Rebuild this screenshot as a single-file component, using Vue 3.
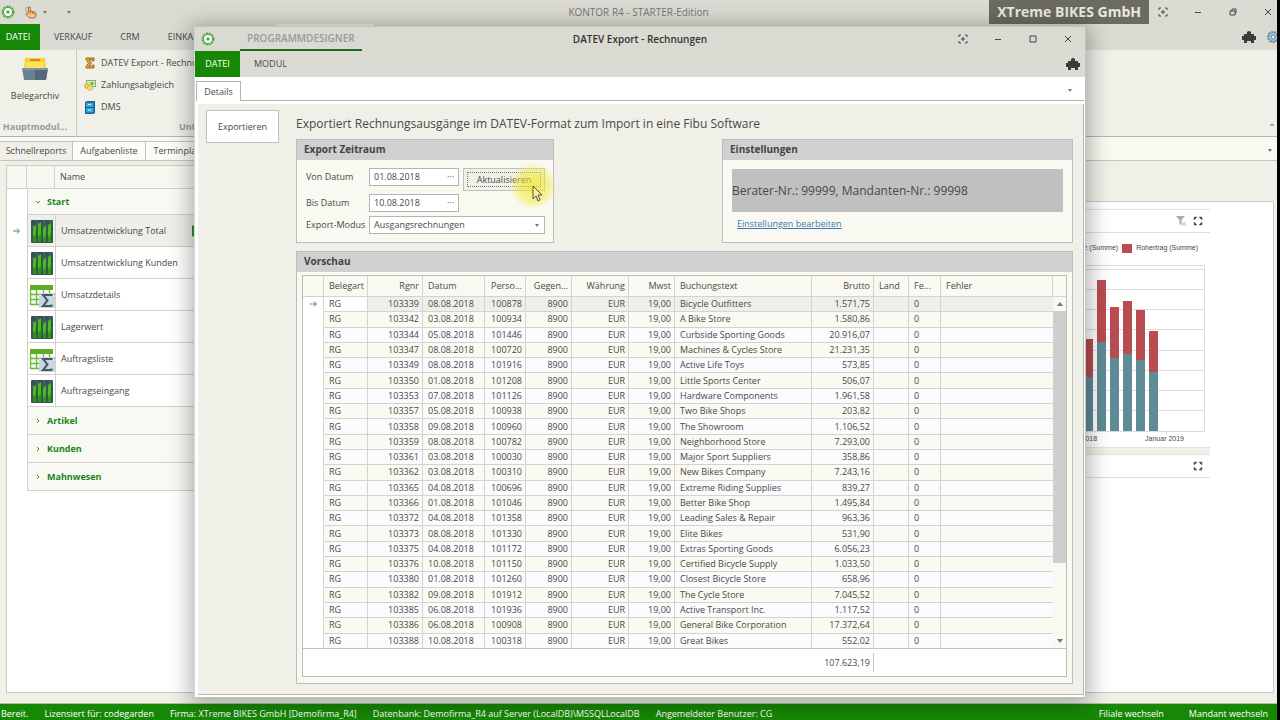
<script setup>
import { ref } from "vue";

const reports = [
  { name: "Umsatzentwicklung Total", icon: "chart", active: true },
  { name: "Umsatzentwicklung Kunden", icon: "chart" },
  { name: "Umsatzdetails", icon: "sum" },
  { name: "Lagerwert", icon: "chart" },
  { name: "Auftragsliste", icon: "sum" },
  { name: "Auftragseingang", icon: "chart" },
];
const groups = ["Artikel", "Kunden", "Mahnwesen"];

const fromDate = ref("01.08.2018");
const toDate = ref("10.08.2018");
const mode = ref("Ausgangsrechnungen");

const rows = [
  ["103339", "08.08.2018", "100878", "Bicycle Outfitters", "1.571,75"],
  ["103342", "03.08.2018", "100934", "A Bike Store", "1.580,86"],
  ["103344", "05.08.2018", "101446", "Curbside Sporting Goods", "20.916,07"],
  ["103347", "08.08.2018", "100720", "Machines & Cycles Store", "21.231,35"],
  ["103349", "08.08.2018", "101916", "Active Life Toys", "573,85"],
  ["103350", "01.08.2018", "101208", "Little Sports Center", "506,07"],
  ["103353", "07.08.2018", "101126", "Hardware Components", "1.961,58"],
  ["103357", "05.08.2018", "100938", "Two Bike Shops", "203,82"],
  ["103358", "09.08.2018", "100960", "The Showroom", "1.106,52"],
  ["103359", "08.08.2018", "100782", "Neighborhood Store", "7.293,00"],
  ["103361", "03.08.2018", "100030", "Major Sport Suppliers", "358,86"],
  ["103362", "03.08.2018", "100310", "New Bikes Company", "7.243,16"],
  ["103365", "04.08.2018", "100696", "Extreme Riding Supplies", "839,27"],
  ["103366", "01.08.2018", "101046", "Better Bike Shop", "1.495,84"],
  ["103372", "04.08.2018", "101358", "Leading Sales & Repair", "963,36"],
  ["103373", "08.08.2018", "101330", "Elite Bikes", "531,90"],
  ["103375", "04.08.2018", "101172", "Extras Sporting Goods", "6.056,23"],
  ["103376", "10.08.2018", "101150", "Certified Bicycle Supply", "1.033,50"],
  ["103380", "01.08.2018", "101260", "Closest Bicycle Store", "658,96"],
  ["103382", "09.08.2018", "101912", "The Cycle Store", "7.045,52"],
  ["103385", "06.08.2018", "101936", "Active Transport Inc.", "1.117,52"],
  ["103386", "06.08.2018", "100908", "General Bike Corporation", "17.372,64"],
  ["103388", "10.08.2018", "100318", "Great Bikes", "552,02"],
];

// x, top of the red part, top of the teal part
const bars = [
  [24, 79, 117],
  [37, 20, 82],
  [50, 47, 98],
  [63, 41, 94],
  [76, 50, 100],
  [89, 71, 112],
];
const gridLines = [10, 30, 50, 70, 91, 111, 131, 151];
</script>

<template>
  <div class="desktop">
    <header class="titlebar">
      <div class="quick">
        <svg class="gear" width="14" height="14" viewBox="0 0 14 14">
          <circle cx="7" cy="7" r="5.7" fill="none" stroke="#4aa23c" stroke-width="1.5" stroke-dasharray="2 1" />
          <circle cx="7" cy="7" r="4.6" fill="#f4fbf0" stroke="#4aa23c" />
          <circle cx="7" cy="7" r="1.6" fill="#4aa23c" />
        </svg>
        <svg class="hand" width="12" height="13" viewBox="0 0 12 13">
          <path d="M3.5 7V2q0-1 1-1t1 1v3l4 1q1.500.5 1.500 2v2l-1.500 2h-5L1 8.500q0-1 1-1z" fill="#f3c58c" stroke="#a8672c" />
          <path d="M5.500 5v3M7.500 6v2M9.300 6.500v2" stroke="#a8672c" stroke-width=".8" />
          <circle cx="3" cy="3.500" r="2.500" fill="none" stroke="#b98a63" stroke-width=".8" />
        </svg>
        <span class="caret"></span>
        <span class="caret far"></span>
      </div>
      <h1 class="app-title">KONTOR R4 - STARTER-Edition</h1>
      <div class="window-side">
        <strong class="company">XTreme BIKES GmbH</strong>
        <div class="window-buttons">
          <button aria-label="Vollbild">
            <svg width="10" height="10" viewBox="0 0 10 10"><path d="M1 3V1h2M7 1h2v2M9 7v2H7M3 9H1V7M4 4h2v2H4z" /></svg>
          </button>
          <button aria-label="Minimieren">
            <svg width="10" height="10" viewBox="0 0 10 10"><path d="M2 5.500h6" /></svg>
          </button>
          <button aria-label="Wiederherstellen">
            <svg width="10" height="10" viewBox="0 0 10 10"><path d="M2 4h5v4H2zM4 4V2h4v4H7" /></svg>
          </button>
          <button aria-label="Schließen">
            <svg width="10" height="10" viewBox="0 0 10 10"><path d="M2 2l6 6M8 2l-6 6" /></svg>
          </button>
        </div>
      </div>
    </header>

    <nav class="menu">
      <button class="file">DATEI</button>
      <button>VERKAUF</button>
      <button>CRM</button>
      <button>EINKAUF</button>
      <span class="context-tab"></span>
      <div class="menu-icons">
        <svg width="14" height="14" viewBox="0 0 14 14">
          <path d="M5 2q2-2 4 0v2h3v2h2v4h-2v3H9v-2H5v2H2v-3H0V6h2V4h3z" fill="#3b3b38" />
        </svg>
        <svg class="settings" width="14" height="14" viewBox="0 0 14 14">
          <circle cx="7" cy="7" r="5" fill="#a9c3d3" stroke="#5c87a3" stroke-width="2" stroke-dasharray="2 1" />
          <circle cx="7" cy="7" r="2" fill="#eef3f5" stroke="#5c87a3" />
        </svg>
      </div>
    </nav>

    <section class="ribbon">
      <div class="ribbon-group archive">
        <button class="big">
          <svg width="28" height="24" viewBox="0 0 28 24">
            <path d="M4 1h20l1 11H3z" fill="#fbd02f" />
            <path d="M5 5h18v7H5z" fill="#ffe05a" />
            <path d="M9 2h10v2H9z" fill="#d98a20" />
            <path d="M1 11h26l-2 12H3z" fill="#6b8193" />
            <path d="M14 11h13l-2 12H14z" fill="#536a7e" />
            <path d="M1 11h26v2H1z" fill="#7e93a3" />
          </svg>
          <span>Belegarchiv</span>
        </button>
        <p>Hauptmodul...</p>
      </div>
      <div class="ribbon-group company-group">
        <button class="small">
          <svg width="12" height="12" viewBox="0 0 12 12">
            <path d="M2 1h8v3H8.500L8 2.800H5L7.500 6 5 9.200h3L8.500 8H10v3H2V9.500L4.500 6 2 2.500z" fill="#e6ad28" stroke="#73541c" stroke-width=".8" />
          </svg>
          DATEV Export - Rechnungen
        </button>
        <button class="small">
          <svg width="12" height="12" viewBox="0 0 12 12">
            <path d="M2 1h10v7H2z" fill="#7fb56a" />
            <path d="M3 2h8v5H3z" fill="#d5e6bd" />
            <circle cx="8" cy="4.500" r="1.500" fill="#66a050" />
            <circle cx="3" cy="7" r="2.500" fill="#f0cf42" stroke="#b99422" stroke-width=".5" />
            <circle cx="6" cy="9" r="2.500" fill="#f7dc62" stroke="#b99422" stroke-width=".5" />
          </svg>
          Zahlungsabgleich
        </button>
        <button class="small">
          <svg width="12" height="13" viewBox="0 0 12 13">
            <path d="M1 1l2-1h8v12l-2 1H1z" fill="#1b5d8c" />
            <path d="M2 1.500h7.500v4.500H2zM2 7h7.500v4.500H2z" fill="#37a3df" />
            <path d="M4 3.500h3M4 9h3" stroke="#dff2fb" />
          </svg>
          DMS
        </button>
        <p>Unternehmen</p>
      </div>
      <button class="collapse" aria-label="Menüband einklappen">
        <svg width="8" height="8" viewBox="0 0 8 8"><path d="M2 5l2-2 2 2" /></svg>
      </button>
    </section>

    <nav class="doc-tabs">
      <button class="current">Schnellreports</button>
      <button>Aufgabenliste</button>
      <button>Terminplaner</button>
      <span class="caret last"></span>
    </nav>

    <main class="workspace">
      <section class="tree">
        <div class="tree-head"><span></span><span></span><span>Name</span></div>
        <div class="tree-group open">
          <svg width="8" height="8" viewBox="0 0 8 8"><path d="M2 3l2 2 2-2" /></svg>Start
        </div>
        <div v-for="report in reports" :key="report.name" class="report" :class="{ active: report.active }">
          <span class="marker">
            <svg v-if="report.active" width="9" height="8" viewBox="0 0 9 8"><path d="M1 4h6M5 1.500L7.500 4 5 6.500" /></svg>
          </span>
          <span class="report-icon">
            <svg v-if="report.icon === 'chart'" width="24" height="24" viewBox="0 0 24 24">
              <rect x="1" y="1" width="22" height="23" rx="1" fill="#37525a" />
              <path d="M1 7h22M1 13h22M7 1v8M14 1v8M20 1v8" stroke="#5d777c" stroke-width=".7" />
              <path d="M3 8l3-2v17H3zM8 5l3-2v20H8zM13 9l3-2v16h-3zM18 6l3-2v19h-3z" fill="#52b52b" />
              <path d="M6 6l1 1v16H6zM11 3l1 1v19h-1zM16 7l1 1v15h-1zM21 4l1 1v18h-1z" fill="#1f6b1c" />
              <path d="M3 23v-5l3-3v8zM8 23v-5l3-3v8zM13 23v-4l3-3v7zM18 23v-5l3-3v8z" fill="#349021" />
            </svg>
            <svg v-else width="26" height="26" viewBox="0 0 26 26">
              <path d="M1 3h23v5H1z" fill="#5cae22" />
              <path d="M2 8h21v14H2z" fill="#f6faf0" />
              <path d="M1.500 8v14.500H12M7.500 8v14M14.500 8v5M20.500 8v5M2 12.500h20M2 17.500h8" fill="none" stroke="#6cb83a" stroke-width="1.300" />
              <path d="M10 11h16v15H10z" fill="#ccd6de" />
              <path d="M22.500 14v-1H14l4.500 5.500L14 24h8.500v-1.500" fill="none" stroke="#48586a" stroke-width="2" />
            </svg>
          </span>
          <span class="report-name">{{ report.name }}</span>
          <span v-if="report.active" class="play"></span>
        </div>
        <div v-for="group in groups" :key="group" class="tree-group">
          <svg width="8" height="8" viewBox="0 0 8 8"><path d="M3 2l2 2-2 2" /></svg>{{ group }}
        </div>
      </section>

      <section class="dashboard">
        <div class="card">
          <div class="card-head">
            <svg width="11" height="10" viewBox="0 0 11 10">
              <path d="M0 0h9L5.500 4v5l-2-1V4z" fill="#aaa" /><path d="M6 6l4 4M10 6l-4 4" stroke="#bbb" />
            </svg>
            <svg width="10" height="10" viewBox="0 0 10 10">
              <path d="M1 1h3L1 4zM9 1v3L6 1zM9 9H6l3-3zM1 9V6l3 3zM2 2l1 1M8 2L7 3M8 8L7 7M2 8l1-1" fill="#555" stroke="#555" stroke-width=".5" />
            </svg>
          </div>
          <div class="legend">
            <i class="teal"></i>Umsatz (Summe)<i class="red"></i>Rohertrag (Summe)
          </div>
          <svg class="chart" width="150" height="174" viewBox="0 0 150 174">
            <path d="M0 5.500h144.500v166H0M106.500 171v3" fill="none" stroke="#dadada" />
            <path v-for="y in gridLines" :key="y" :d="`M0 ${y - 0.5}h144`" stroke="#dcdcdc" />
            <g v-for="bar in bars" :key="bar[0]">
              <rect :x="bar[0]" :y="bar[1]" width="9" :height="bar[2] - bar[1]" fill="#b94c51" />
              <rect :x="bar[0]" :y="bar[2]" width="9" :height="171 - bar[2]" fill="#5e8b96" />
            </g>
          </svg>
          <div class="axis"><span>Januar 2018</span><span>Januar 2019</span></div>
        </div>
        <div class="card rest">
          <div class="card-head">
            <svg width="10" height="10" viewBox="0 0 10 10">
              <path d="M1 1h3L1 4zM9 1v3L6 1zM9 9H6l3-3zM1 9V6l3 3zM2 2l1 1M8 2L7 3M8 8L7 7M2 8l1-1" fill="#555" stroke="#555" stroke-width=".5" />
            </svg>
          </div>
        </div>
      </section>
    </main>

    <footer class="status">
      <span>Bereit.</span>
      <span>Lizensiert für: codegarden</span>
      <span>Firma: XTreme BIKES GmbH [Demofirma_R4]</span>
      <span>Datenbank: Demofirma_R4 auf Server (LocalDB)\MSSQLLocalDB</span>
      <span>Angemeldeter Benutzer: CG</span>
      <button class="push">Filiale wechseln</button>
      <button>Mandant wechseln</button>
    </footer>

    <section class="dialog" role="dialog" aria-label="DATEV Export - Rechnungen">
      <header class="dialog-title">
        <div class="dialog-left">
          <svg class="gear" width="14" height="14" viewBox="0 0 14 14">
            <circle cx="7" cy="7" r="5.7" fill="none" stroke="#4aa23c" stroke-width="1.500" stroke-dasharray="2 1" />
            <circle cx="7" cy="7" r="4.600" fill="#f4fbf0" stroke="#4aa23c" />
            <circle cx="7" cy="7" r="1.600" fill="#4aa23c" />
          </svg>
          <button class="designer">PROGRAMMDESIGNER</button>
        </div>
        <h2>DATEV Export - Rechnungen</h2>
        <div class="window-buttons">
          <button aria-label="Vollbild">
            <svg width="10" height="10" viewBox="0 0 10 10"><path d="M1 3V1h2M7 1h2v2M9 7v2H7M3 9H1V7M4 4h2v2H4z" /></svg>
          </button>
          <button aria-label="Minimieren">
            <svg width="10" height="10" viewBox="0 0 10 10"><path d="M2 5.500h6" /></svg>
          </button>
          <button aria-label="Maximieren">
            <svg width="10" height="10" viewBox="0 0 10 10"><path d="M2 2h6v6H2z" /></svg>
          </button>
          <button aria-label="Schließen">
            <svg width="10" height="10" viewBox="0 0 10 10"><path d="M2 2l6 6M8 2l-6 6" /></svg>
          </button>
        </div>
      </header>
      <nav class="menu dialog-menu">
        <button class="file">DATEI</button>
        <button>MODUL</button>
        <div class="menu-icons">
          <svg width="14" height="14" viewBox="0 0 14 14">
            <path d="M5 2q2-2 4 0v2h3v2h2v4h-2v3H9v-2H5v2H2v-3H0V6h2V4h3z" fill="#3b3b38" />
          </svg>
        </div>
      </nav>
      <nav class="detail-tabs">
        <button>Details</button>
        <div><span class="caret"></span></div>
      </nav>

      <div class="dialog-body">
        <button class="export">Exportieren</button>
        <div class="form">
          <p class="intro">Exportiert Rechnungsausgänge im DATEV-Format zum Import in eine Fibu Software</p>
          <div class="panels">
            <section class="panel period">
              <h3>Export Zeitraum</h3>
              <div class="fields">
                <label for="from">Von Datum</label>
                <div class="date"><input id="from" v-model="fromDate" /><button aria-label="Von Datum wählen">···</button></div>
                <button class="refresh"><span>Aktualisieren</span></button>
                <label for="to">Bis Datum</label>
                <div class="date"><input id="to" v-model="toDate" /><button aria-label="Bis Datum wählen">···</button></div>
                <label class="mode-label" for="mode">Export-Modus</label>
                <div class="mode">
                  <select id="mode" v-model="mode"><option>Ausgangsrechnungen</option></select>
                  <span class="caret"></span>
                </div>
              </div>
              <svg class="pointer" width="48" height="48" viewBox="0 0 48 48">
                <defs>
                  <radialGradient id="glow">
                    <stop offset="0" stop-color="#f2e600" stop-opacity=".65" />
                    <stop offset=".7" stop-color="#f2ea30" stop-opacity=".45" />
                    <stop offset="1" stop-color="#f5f080" stop-opacity="0" />
                  </radialGradient>
                </defs>
                <circle cx="24" cy="24" r="24" fill="url(#glow)" />
                <path d="M24 24v13l3-3 2 5 2-1-2-5h4z" fill="#f7f19a" stroke="#555" />
              </svg>
            </section>
            <section class="panel settings-panel">
              <h3>Einstellungen</h3>
              <div class="settings-body">
                <p>Berater-Nr.: 99999, Mandanten-Nr.: 99998</p>
                <a href="#">Einstellungen bearbeiten</a>
              </div>
            </section>
          </div>

          <section class="panel preview">
            <h3>Vorschau</h3>
            <div class="grid">
              <table>
                <colgroup>
                  <col class="w-mark" /><col class="w-type" /><col class="w-no" /><col class="w-date" />
                  <col class="w-person" /><col class="w-contra" /><col class="w-currency" /><col class="w-tax" />
                  <col class="w-text" /><col class="w-gross" /><col class="w-land" /><col class="w-fe" /><col />
                </colgroup>
                <thead>
                  <tr>
                    <th></th><th>Belegart</th><th class="r">Rgnr</th><th>Datum</th>
                    <th class="r">Perso...</th><th class="r">Gegen...</th><th class="r">Währung</th>
                    <th class="r">Mwst</th><th>Buchungstext</th><th class="r">Brutto</th>
                    <th>Land</th><th>Fe...</th><th>Fehler</th>
                  </tr>
                </thead>
                <tbody>
                  <tr v-for="(row, i) in rows" :key="row[0]">
                    <td class="mark">
                      <svg v-if="i === 0" width="9" height="8" viewBox="0 0 9 8"><path d="M1 4h6M5 1.500L7.500 4 5 6.500" /></svg>
                    </td>
                    <td>RG</td>
                    <td class="r">{{ row[0] }}</td>
                    <td>{{ row[1] }}</td>
                    <td class="r">{{ row[2] }}</td>
                    <td class="r">8900</td>
                    <td class="r">EUR</td>
                    <td class="r">19,00</td>
                    <td class="text">{{ row[3] }}</td>
                    <td class="r">{{ row[4] }}</td>
                    <td></td>
                    <td>0</td>
                    <td></td>
                  </tr>
                </tbody>
                <tfoot>
                  <tr>
                    <td colspan="10"><span>107.623,19</span></td>
                    <td colspan="3"></td>
                  </tr>
                </tfoot>
              </table>
              <div class="scroll">
                <div class="scroll-head"></div>
                <div class="arrow up"></div>
                <div class="track"><div class="thumb"></div></div>
                <div class="arrow down"></div>
                <div class="scroll-foot"></div>
              </div>
            </div>
          </section>
        </div>
      </div>
    </section>
  </div>
</template>

<style>
body {
  margin: 0;
}
</style>

<style scoped>
* {
  box-sizing: border-box;
}

.desktop {
  position: relative;
  display: flex;
  flex-direction: column;
  height: 100vh;
  min-height: 600px;
  overflow: hidden;
  background: #f0f0e9;
  border-right: 3px solid #000;
  color: #484848;
  font-family: "Open Sans", "Noto Sans", sans-serif;
  font-size: 9px;
  line-height: 14px;
}

button,
input,
select {
  margin: 0;
  padding: 0;
  border: 0;
  background: none;
  color: inherit;
  font: inherit;
}

h1,
h2,
h3,
p {
  margin: 0;
}

svg {
  display: block;
  flex: none;
}

.caret {
  flex: none;
  width: 0;
  border: 2px solid transparent;
  border-top: 3px solid #777;
  border-bottom: 0;
}

/* title bar */
.titlebar {
  display: grid;
  grid-template-columns: 1fr auto 1fr;
  align-items: center;
  height: 24px;
  flex: none;
  background: #dbdbd3;
}

.quick {
  display: flex;
  align-items: center;
  padding-left: 1px;
}

.hand {
  margin: 0 6px 0 10px;
}

.far {
  margin-left: 20px;
}

.app-title {
  font-size: 10px;
  font-weight: 400;
  color: #777;
}

.window-side {
  display: flex;
  justify-content: flex-end;
}

.company {
  padding: 0 8px;
  background: #6b6b61;
  color: #e9e9e2;
  font-size: 14px;
  line-height: 24px;
  white-space: nowrap;
}

.window-buttons {
  display: flex;
  justify-content: flex-end;
  align-items: center;
  gap: 25px;
  padding: 0 4px 0 9px;
}

.window-buttons path {
  fill: none;
  stroke: #444;
}

/* menus */
.menu {
  display: flex;
  flex: none;
  height: 26px;
  background: #dbdbd3;
}

.menu button {
  padding: 0 14px;
}

.menu .file {
  width: 40px;
  padding: 0 4px 0 0;
  background: #178805;
  color: #fff;
}

.context-tab {
  width: 98px;
  height: 3px;
  margin-left: 58px;
  background: #efeee7;
}

.menu-icons {
  display: flex;
  align-items: center;
  gap: 10px;
  margin: 0 -3px 0 auto;
}

/* ribbon */
.ribbon {
  display: flex;
  flex: none;
  height: 87px;
  border-bottom: 1px solid #b4b4b0;
}

.ribbon-group {
  display: flex;
  flex-direction: column;
}

.ribbon-group p {
  margin-top: auto;
  padding-bottom: 2px;
  color: #999;
  font-weight: 700;
  text-align: center;
}

.archive {
  width: 77px;
  padding: 7px 6px 0 0;
  border-right: 1px solid #c9c9c4;
}

.big {
  display: flex;
  flex-direction: column;
  align-items: center;
  gap: 8px;
}

.company-group {
  width: 260px;
  padding: 2px 0 0 7px;
}

.small {
  display: flex;
  align-items: center;
  gap: 5px;
  height: 22px;
}

.collapse {
  align-self: flex-end;
  margin: 0 1px 7px auto;
}

.collapse path {
  fill: none;
  stroke: #666;
}

.doc-tabs {
  display: flex;
  flex: none;
  height: 24px;
  padding-top: 4px;
  background: #f9f9f1;
  border-bottom: 1px solid #c4c4bf;
}

.doc-tabs button {
  width: 73px;
  border: 1px solid #c4c4bf;
  border-left: 0;
  border-bottom: 0;
  background: #fcfcf8;
  white-space: nowrap;
}

.doc-tabs button.current {
  background: #f0f0e9;
}

.last {
  align-self: center;
  margin: 0 5px 0 auto;
}

/* workspace */
.workspace {
  display: flex;
  flex: 1;
  gap: 10px;
  min-height: 0;
  padding: 4px 3px 10px 6px;
}

.tree {
  width: 260px;
  border: 1px solid #cbcbc7;
  background: #fff;
}

.tree-head {
  display: grid;
  grid-template-columns: 20px 28px 1fr;
  height: 23px;
  background: #f7f7f0;
  border-bottom: 1px solid #d0d0cc;
  line-height: 22px;
}

.tree-head span {
  padding-left: 5px;
  border-right: 1px solid #d0d0cc;
}

.tree-group {
  display: flex;
  align-items: center;
  gap: 5px;
  height: 28px;
  margin-left: 20px;
  padding-left: 6px;
  background: #f9f9f3;
  border-left: 1px solid #d0d0cc;
  border-bottom: 1px solid #d0d0cc;
  color: #228217;
  font-weight: 700;
}

.tree-group path,
.marker path {
  fill: none;
  stroke: #3f9a35;
}

.tree-group.open {
  height: 26px;
}

.report {
  display: grid;
  grid-template-columns: 20px 29px 133px 1fr;
  align-items: center;
  height: 32px;
}

.report > span:nth-child(n + 2) {
  display: flex;
  align-items: center;
  height: 32px;
  border-bottom: 1px solid #d0d0cc;
}

.marker {
  padding-left: 5px;
}

.report-icon {
  justify-content: center;
  border-left: 1px solid #d0d0cc;
  border-right: 1px solid #d0d0cc;
}

.report-name {
  padding-left: 5px;
  white-space: nowrap;
}

.report:not(.active) .report-name {
  grid-column: 3 / 5;
}

.active > span:nth-child(n + 2) {
  background: #efefe9;
}

.play::before {
  content: "";
  margin-left: 3px;
  border: 6px solid transparent;
  border-left: 9px solid #2c9222;
}

.dashboard {
  flex: 1;
  display: flex;
  flex-direction: column;
  gap: 6px;
  margin-top: 36px;
  padding: 7px 63px 0 0;
  border: 1px solid #cbcbc7;
  background: #fff;
}

.card {
  border-top: 1px solid #e2e2da;
  border-bottom: 1px solid #e2e2da;
  box-shadow: 0 6px #f0f0e9;
}

.card.rest {
  flex: 1;
  border-bottom: 0;
  box-shadow: none;
}

.card-head {
  display: flex;
  justify-content: flex-end;
  align-items: center;
  gap: 6px;
  height: 23px;
  padding-right: 7px;
  border-bottom: 1px solid #dededa;
}

.legend {
  display: flex;
  align-items: center;
  justify-content: flex-end;
  gap: 4px;
  height: 24px;
  margin-top: 3px;
  padding-right: 12px;
  font-family: "Liberation Sans", Arial, sans-serif;
  font-size: 7px;
}

.legend i {
  width: 10px;
  height: 9px;
}

.teal {
  background: #5e8b96;
}

.red {
  background: #b94c51;
}

.chart {
  margin-left: auto;
}

.axis {
  display: flex;
  justify-content: flex-end;
  gap: 48px;
  height: 13px;
  padding-right: 26px;
  font-family: "Liberation Sans", Arial, sans-serif;
  font-size: 7px;
  line-height: 9px;
}

.status {
  display: flex;
  flex: none;
  align-items: center;
  gap: 16px;
  height: 17px;
  padding: 3px 9px 0 1px;
  border-top: 1px solid #a5c795;
  background: #178805;
  color: #fff;
  white-space: nowrap;
}

.push {
  margin-left: auto;
  margin-right: 9px;
}

/* export window */
.dialog {
  position: absolute;
  inset: 26px 191px 22px 194px;
  display: flex;
  flex-direction: column;
  background: #fff;
  border: 1px solid #c3c3be;
  border-left-color: #d6d6d2;
  box-shadow: 0 3px 20px 4px rgba(0, 0, 0, 0.3);
}

.dialog-title {
  display: grid;
  grid-template-columns: 1fr auto 1fr;
  align-items: center;
  flex: none;
  height: 24px;
  background: #dadad2;
}

.dialog-left {
  display: flex;
  align-items: center;
  gap: 25px;
  padding-left: 6px;
}

.designer {
  height: 24px;
  padding: 0 7px;
  border-bottom: 2px solid #1d6b1a;
  color: #999;
  font-size: 10px;
  font-weight: 600;
}

.dialog-title h2 {
  font-size: 10px;
  font-weight: 600;
  color: #333;
}

.dialog-title .window-buttons {
  padding-right: 12px;
}

.dialog-menu {
  height: 26px;
}

.dialog-menu .file {
  width: 45px;
  padding: 0;
}

.dialog-menu .menu-icons {
  margin-right: 5px;
}

.detail-tabs {
  display: flex;
  flex: none;
  height: 27px;
  padding: 4px 1px 3px;
}

.detail-tabs button {
  width: 45px;
  border: 1px solid #b4b4b0;
  border-bottom: 0;
}

.detail-tabs div {
  display: flex;
  flex: 1;
  justify-content: flex-end;
  padding: 8px 12px 0 0;
  border-bottom: 1px solid #b4b4b0;
}

.dialog-body {
  display: flex;
  flex: 1;
  align-items: stretch;
  min-height: 0;
  margin: 0 1px 2px 3px;
  padding: 6px 10px 10px 8px;
  background: #f0f0e9;
  border-right: 1px solid #b4b4b0;
  border-bottom: 1px solid #b4b4b0;
}

.export {
  flex: none;
  align-self: flex-start;
  width: 73px;
  height: 33px;
  margin-right: 17px;
  border: 1px solid #c0c0bc;
  background: #fff;
}

.form {
  display: flex;
  flex: 1;
  flex-direction: column;
  min-width: 0;
}

.intro {
  height: 29px;
  font-size: 12px;
  line-height: 27px;
}

.panels {
  display: flex;
  justify-content: space-between;
  margin-bottom: 8px;
}

.panel {
  background: #f9f9f2;
  border: 1px solid #bdbdb9;
}

.panel h3 {
  height: 20px;
  padding-left: 7px;
  background: #d0d0d0;
  color: #444;
  font-size: 10px;
  font-weight: 700;
  line-height: 19px;
}

.period {
  position: relative;
  width: 258px;
  height: 104px;
}

.fields {
  display: grid;
  grid-template-columns: 63px 90px 86px;
  grid-template-rows: 22px 18px 18px;
  row-gap: 4px;
  column-gap: 0;
  padding: 8px 9px;
}

.fields label {
  line-height: 18px;
  white-space: nowrap;
}

.mode-label,
.fields label[for="to"] {
  grid-column: 1;
}

.date,
.mode {
  display: flex;
  align-items: center;
  height: 18px;
  border: 1px solid #b4b4b0;
  background: #fff;
}

.date input {
  flex: 1;
  min-width: 0;
  padding-left: 4px;
}

.date button {
  width: 15px;
}

.refresh {
  height: 23px;
  margin-left: 4px;
  padding: 3px;
  border: 1px solid #c0c0bc;
  background: #f0f0e9;
}

.refresh span {
  display: block;
  border: 1px dotted #777;
  line-height: 13px;
}

.mode {
  grid-column: 2 / 4;
  padding-right: 5px;
}

.mode select {
  flex: 1;
  appearance: none;
  padding-left: 4px;
}

.pointer {
  position: absolute;
  right: -4px;
  top: 22px;
  pointer-events: none;
}

.settings-panel {
  width: 351px;
}

.settings-body {
  padding: 9px;
}

.settings-body p {
  height: 43px;
  margin-bottom: 5px;
  background: #c0c0c0;
  font-size: 12px;
  line-height: 43px;
}

.settings-body a {
  margin-left: 5px;
  color: #3c79b0;
}

.preview {
  display: flex;
  flex: 1;
  flex-direction: column;
  min-height: 0;
}

.preview h3 {
  flex: none;
}

.grid {
  display: flex;
  flex: 1;
  min-height: 0;
  margin: 3px 5px 6px;
  border: 1px solid #bdbdb9;
  background: #fff;
}

table {
  flex: 1;
  width: 100px;
  height: 100%;
  border-collapse: separate;
  border-spacing: 0;
  table-layout: fixed;
}

.w-mark { width: 21px; }
.w-type { width: 44px; }
.w-no { width: 55px; }
.w-date { width: 62px; }
.w-person { width: 41px; }
.w-contra { width: 46px; }
.w-currency { width: 57px; }
.w-tax { width: 46px; }
.w-text { width: 137px; }
.w-gross { width: 62px; }
.w-land { width: 35px; }
.w-fe { width: 32px; }

th,
td {
  padding: 0 3px 0 5px;
  border-right: 1px solid #d3d3cf;
  border-bottom: 1px solid #d3d3cf;
  font-weight: 400;
  text-align: left;
  white-space: nowrap;
}

th {
  height: 21px;
  background: #f9f9f2;
}

.r {
  text-align: right;
}

tbody td {
  line-height: 12px;
}

tbody tr:nth-child(even) {
  background: #fafaf3;
}

tbody tr:nth-child(odd) {
  background: #fbfbfd;
}

tbody tr:first-child {
  background: #efefe9;
}

tbody tr:first-child td:nth-child(2),
tbody td.mark {
  background: #fff;
}

tbody td.mark {
  padding-left: 6px;
  border-bottom-color: #fff;
}

td.mark path {
  fill: none;
  stroke: #6a7f62;
}

tbody td:last-child {
  border-right: 0;
}

tbody tr:last-child td {
  border-bottom-color: #c3c3bf;
}

tfoot td {
  height: 27px;
  padding: 4px 0;
  border: 0;
  text-align: right;
}

tfoot span {
  display: inline-block;
  padding-right: 3px;
  border-right: 1px solid #c9c9c5;
  line-height: 19px;
}

.scroll {
  display: flex;
  flex: none;
  flex-direction: column;
  width: 13px;
  background: #f9f9f2;
}

.scroll-head {
  height: 21px;
  border-bottom: 1px solid #d3d3cf;
}

.scroll-foot {
  height: 28px;
  border-top: 1px solid #c3c3bf;
  background: #fff;
}

.track {
  flex: 1;
}

.thumb {
  height: 78%;
  background: #cfcfcf;
}

.arrow {
  display: flex;
  align-items: center;
  justify-content: center;
  height: 14px;
}

.arrow::before {
  content: "";
  border: 3px solid transparent;
}

.up::before {
  border-top: 0;
  border-bottom: 4px solid #777;
}

.down::before {
  border-bottom: 0;
  border-top: 4px solid #777;
}
</style>
